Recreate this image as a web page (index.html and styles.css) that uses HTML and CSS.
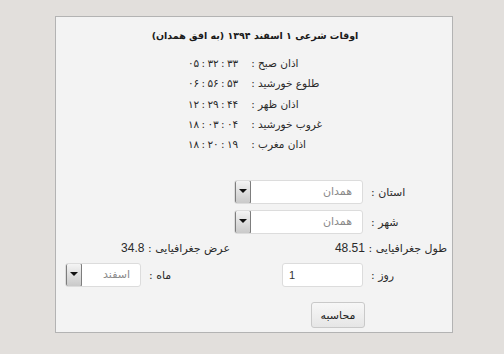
FILE: index.html
```html
<!DOCTYPE html>
<html lang="fa">
<head>
    <meta charset="UTF-8">
    <meta name="viewport" content="width=device-width, initial-scale=1.0">
    <title>اوقات شرعی</title>
    <link rel="stylesheet" href="styles.css">
</head>
<body>
    <div class="panel" dir="rtl">
        <h1 class="title">اوقات شرعی ۱ اسفند ۱۳۹۴ (به افق همدان)</h1>

        <div class="times">
            <span class="t-label">اذان صبح :</span><span class="t-val">۰۵ : ۳۲ : ۳۳</span>
            <span class="t-label">طلوع خورشید :</span><span class="t-val">۰۶ : ۵۶ : ۵۳</span>
            <span class="t-label">اذان ظهر :</span><span class="t-val">۱۲ : ۲۹ : ۴۴</span>
            <span class="t-label">غروب خورشید :</span><span class="t-val">۱۸ : ۰۳ : ۰۴</span>
            <span class="t-label">اذان مغرب :</span><span class="t-val">۱۸ : ۲۰ : ۱۹</span>
        </div>

        <div class="form">
            <span class="label">استان :</span>
            <div class="select wide"><span class="value">همدان</span><span class="arrow"></span></div>
            <span class="empty"></span><span class="empty"></span>

            <span class="label">شهر :</span>
            <div class="select wide"><span class="value">همدان</span><span class="arrow"></span></div>
            <span class="empty"></span><span class="empty"></span>

            <span class="coord">طول جغرافیایی : <bdi>48.51</bdi></span>
            <span class="coord">عرض جغرافیایی : <bdi>34.8</bdi></span>

            <span class="label">روز :</span>
            <input class="field" type="text" value="1" dir="ltr">
            <span class="label">ماه :</span>
            <div class="select narrow"><span class="value">اسفند</span><span class="arrow"></span></div>

            <span class="empty"></span>
            <button class="btn">محاسبه</button>
        </div>
    </div>
</body>
</html>
```

FILE: styles.css
```css
*{margin:0;padding:0;box-sizing:border-box}
body{background:#e2dfdc;font-family:"DejaVu Sans",Tahoma,sans-serif;font-size:11px;color:#2a2a2a}
.panel{width:398px;height:317px;margin:16px 0 0 55px;background:#f3f3f3;border:1px solid #b3b3b3;padding:9px 5px 0 7px}
.title{font-size:9.5px;font-weight:bold;text-align:center;line-height:20px;color:#1a1a1a;margin-bottom:7px}
.times{display:grid;grid-template-columns:auto auto;justify-content:center;column-gap:13px;line-height:20.3px;font-size:10.5px}
.t-label{text-align:left}
.t-val{direction:ltr;unicode-bidi:isolate;text-align:left;word-spacing:-1px}
.form{display:grid;grid-template-columns:80px 129px 85px 77px;column-gap:4px;row-gap:6px;margin-top:26px;align-items:center}
.label{text-align:left;padding-left:4px}
.coord{grid-column:span 2;text-align:right;line-height:16px}
.coord bdi{font-family:"Liberation Sans",Arial,sans-serif;font-size:12px}
.select{display:flex;flex-direction:row;height:24px;background:#fff;border:1px solid #dcdcdc;border-radius:3px;overflow:hidden;justify-self:start}
.select.wide{width:129px}
.select.narrow{width:76px}
.value{flex:1;color:#8a8a8a;padding-right:10px;line-height:22px}
.arrow{width:16px;height:24px;margin:-1px -1px -1px 0;border:1px solid #7d7d7d;border-radius:2px;background:linear-gradient(#f4f4f4,#c9c9c9);position:relative}
.arrow::after{content:"";position:absolute;left:3px;top:8px;border-left:4px solid transparent;border-right:4px solid transparent;border-top:4px solid #111}
.field{width:81px;height:24px;justify-self:start;border:1px solid #dcdcdc;border-radius:3px;background:#fff;font-family:"Liberation Sans",Arial,sans-serif;font-size:11px;color:#333;padding-left:6px;outline:none}
.btn{grid-column:2;justify-self:start;margin:9px -2px 0 0;width:54px;height:26px;border:1px solid #c9c9c9;border-radius:3px;background:linear-gradient(#f7f7f7,#e6e6e6);font-family:"DejaVu Sans",Tahoma,sans-serif;font-size:11px;color:#222}
```
